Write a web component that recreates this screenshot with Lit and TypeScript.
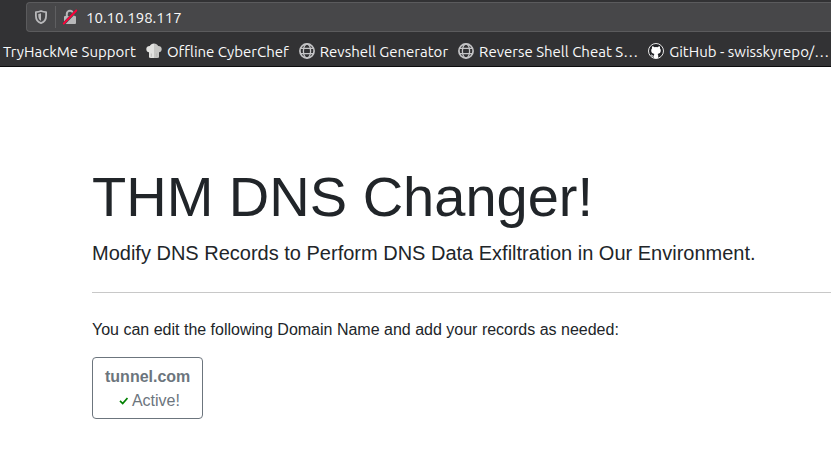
import { LitElement, html, css, svg } from "lit";
import { customElement } from "lit/decorators.js";

const globe = svg`<svg class="icon" viewBox="0 0 16 16" fill="none" stroke="#c4c4c6" aria-hidden="true">
  <circle cx="8" cy="8" r="7.1" stroke-width="1.7"/>
  <ellipse cx="8" cy="8" rx="3.6" ry="7" stroke-width="1.3"/>
  <path d="M2 5.3h12M2 10.7h12" stroke-width="1.3"/>
</svg>`;

const chef = svg`<svg class="icon" viewBox="0 0 16 16" aria-hidden="true">
  <path fill="#e2e2e0" d="M3 14.500V9.300C1.200 9 .3 7.700.3 6 .3 4.200 1.800 2.900 3.800 3 4.500 1.500 6 .6 8 .6V15c-1.800.2-3.500 0-5-.5z"/>
  <path fill="#c6c6c4" d="M8 .6c2 0 3.500.9 4.200 2.400 2-.1 3.500 1.200 3.500 3 0 1.700-.9 3-2.700 3.300v5.200c-1.500.5-3.200.700-5 .500z"/>
  <path fill="none" stroke="#b4b4b2" stroke-width=".8" d="M5.300 10.500v3.300M10.700 10.500v3.300"/>
</svg>`;

const github = svg`<svg class="icon" viewBox="0 0 16 16" aria-hidden="true">
  <circle cx="8" cy="8" r="7.500" fill="#222327" stroke="#e8e8e8"/>
  <path fill="#fff" d="M4.200 3.300c.9 0 1.700.4 2.300.9a7 7 0 0 1 3 0c.6-.5 1.400-.9 2.300-.9.3.7.3 1.400.1 2 .6.7.9 1.400.9 2.300 0 2.300-1.400 3.200-3.200 3.400.4.400.6.9.6 1.600v2.500c-1.500.5-3 .5-4.400 0v-1.600c-1.500.300-2-.3-2.400-1.100-.2-.4-.5-.7-.8-.9.9-.3 1.400.2 1.800.8.4.6.8.7 1.400.5.1-.7.3-1.300.6-1.800-1.800-.2-3.200-1.100-3.200-3.400 0-.9.3-1.600.9-2.300-.2-.6-.2-1.300.1-2z"/>
</svg>`;

const bookmarks = [
  { label: "TryHackMe Support", icon: null },
  { label: "Offline CyberChef", icon: chef },
  { label: "Revshell Generator", icon: globe },
  { label: "Reverse Shell Cheat S…", icon: globe },
  { label: "GitHub - swisskyrepo/…", icon: github },
];

@customElement("browser-bar")
export class BrowserBar extends LitElement {
  static styles = css`
    :host {
      display: block;
      background: #323234;
      border-bottom: 1px solid #0c0c0d;
      color: #f9f9fa;
      font-family: Ubuntu, "Noto Sans", sans-serif;
      font-size: 15px;
      overflow: hidden;
    }
    .address {
      display: flex;
      align-items: center;
      box-sizing: border-box;
      height: 30px;
      margin: 2px 0 0 26px;
      padding-left: 6px;
      background: #474749;
      border: 1px solid #5b5b5d;
      border-right: 0;
      border-radius: 4px 0 0 4px;
    }
    .tool {
      display: flex;
      padding: 0;
      border: 0;
      background: none;
    }
    .icon {
      display: block;
      flex: none;
      width: 16px;
      height: 16px;
    }
    .rule {
      width: 1px;
      height: 22px;
      margin: 0 6px;
      background: #5f5f61;
    }
    .url {
      flex: 1;
      min-width: 0;
      margin-left: 8px;
      padding: 2px 0 0;
      border: 0;
      outline: 0;
      background: none;
      color: inherit;
      font: inherit;
    }
    .bookmarks {
      display: flex;
      align-items: center;
      gap: 10px;
      height: 34px;
      padding: 4px 0 0 3px;
      box-sizing: border-box;
    }
    .bookmark {
      display: flex;
      flex: none;
      align-items: center;
      gap: 5px;
      color: inherit;
      line-height: 20px;
      text-decoration: none;
      white-space: nowrap;
    }
    .label {
      padding-top: 2px;
    }
  `;

  render() {
    return html`
      <div class="address">
        <button class="tool" aria-label="Tracking protection">
          <svg class="icon" viewBox="0 0 16 16" aria-hidden="true">
            <path fill="none" stroke="#b8b8ba" stroke-width="1.800" stroke-linejoin="round" d="M8 2C6.200 2.700 4.500 3 2.900 3.100v3.600c0 3.600 1.700 6.200 5.100 7.500 3.400-1.300 5.100-3.900 5.100-7.500V3.100C11.500 3 9.800 2.700 8 2z"/>
            <path fill="#b8b8ba" d="M8 4.300v7.500C6 10.700 5.300 9 5.300 6.700V5c.9-.1 1.800-.3 2.700-.7z"/>
          </svg>
        </button>
        <span class="rule"></span>
        <button class="tool" aria-label="Connection is not secure">
          <svg class="icon" viewBox="0 0 16 16" aria-hidden="true">
            <path fill="none" stroke="#b8b8ba" stroke-width="2" d="M4.800 7.500V5a3.200 3.200 0 0 1 6.400 0v2.500"/>
            <rect x="2" y="7" width="12" height="8" rx="1" fill="#b8b8ba"/>
            <path stroke="#474749" stroke-width="3" d="M1.500 15 14.500 1.500"/>
            <path stroke="#ff0039" stroke-width="1.900" stroke-linecap="round" d="M1.700 14.600 14.300 1.500"/>
          </svg>
        </button>
        <input class="url" type="text" aria-label="Address" value="10.10.198.117" />
      </div>
      <nav class="bookmarks" aria-label="Bookmarks">
        ${bookmarks.map((b) => html`<a class="bookmark" href="#">${b.icon}<span class="label">${b.label}</span></a>`)}
      </nav>
    `;
  }
}

@customElement("app-root")
export class AppRoot extends LitElement {
  static styles = css`
    :host {
      display: block;
      min-height: 100vh;
      overflow-x: hidden;
      background: #fff;
      color: #212529;
      font: 16px/24px "Liberation Sans", Arial, sans-serif;
    }
    main {
      padding: 96px 0 32px 92px;
    }
    h1 {
      margin: 0 0 8px;
      font-size: 56px;
      font-weight: 300;
      line-height: 67px;
    }
    .lead {
      margin: 0;
      font-size: 20px;
      line-height: 30px;
    }
    hr {
      margin: 24px 0;
      border: 0;
      border-top: 1px solid #c8c8c8;
    }
    .note {
      margin: 0 0 14px;
      line-height: 26px;
    }
    .domain {
      padding: 7px 12px 5px;
      border: 1px solid #6c757d;
      border-radius: 4px;
      background: none;
      color: #6c757d;
      font: inherit;
      text-align: center;
    }
    .name,
    .status {
      display: block;
    }
    .check {
      width: 13px;
      height: 10px;
    }
  `;

  render() {
    return html`
      <browser-bar></browser-bar>
      <main>
        <h1>THM DNS Changer!</h1>
        <p class="lead">Modify DNS Records to Perform DNS Data Exfiltration in Our Environment.</p>
        <hr />
        <p class="note">You can edit the following Domain Name and add your records as needed:</p>
        <button class="domain">
          <strong class="name">tunnel.com</strong>
          <span class="status"><svg class="check" viewBox="0 0 13 10" aria-hidden="true"><path d="M5 4.900 7.700 7.600 12.500 2" fill="none" stroke="#008000" stroke-width="1.700"/></svg> Active!</span>
        </button>
      </main>
    `;
  }
}
